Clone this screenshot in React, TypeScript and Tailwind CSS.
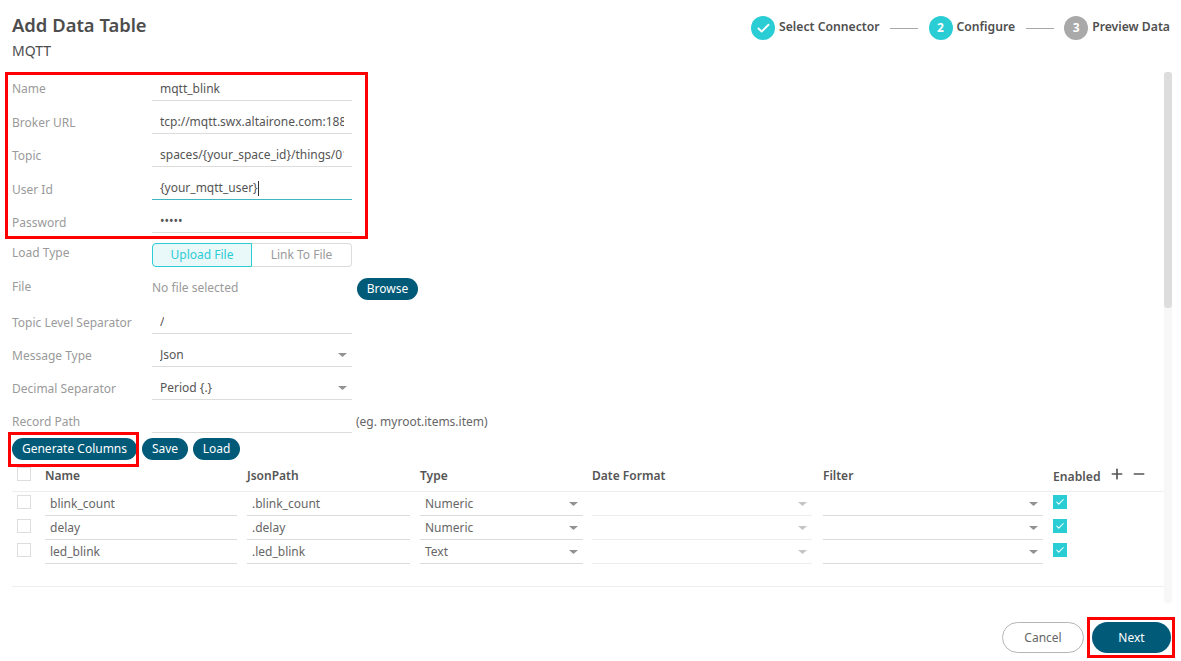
import React from "react";
import { Check, Plus, Minus } from "lucide-react";

const Caret = ({ light }: { light?: boolean }) => (
  <svg width="9" height="4" viewBox="0 0 9 4" className="shrink-0">
    <path d="M0 0h9L4.5 4z" fill={light ? "#c4c4c4" : "#929292"} />
  </svg>
);

const Row = ({ label, children, extra, h = "h-[33px]", lb = "pb-[3px]" }: { label: string; children: React.ReactNode; extra?: React.ReactNode; h?: string; lb?: string }) => (
  <div className={`flex ${h} items-end`}>
    <div className={`w-[140px] shrink-0 self-end text-[12px] leading-[16px] text-[#9a9a9a] ${lb}`}>{label}</div>
    <div className="w-[200px] shrink-0">{children}</div>
    {extra}
  </div>
);

const Field = ({ value, focus, caret, select }: { value: string; focus?: boolean; caret?: boolean; select?: boolean }) => (
  <div className={`flex h-[26px] items-center justify-between overflow-hidden border-b pl-[8px] pt-[3px] text-[12px] whitespace-nowrap text-[#555555] ${select ? "pr-[5px]" : "pr-[8px]"} ${focus ? "border-[#3fb5c0]" : "border-[#dcdcdc]"}`}>
    <span className="flex items-center overflow-hidden">
      {value}
      {caret && <span className="inline-block h-[15px] w-[1px] bg-[#333333]" />}
    </span>
    {select && <Caret />}
  </div>
);

const Pill = ({ children, cls = "" }: { children: React.ReactNode; cls?: string }) => (
  <button className={`h-[22px] rounded-full bg-[#015a78] text-[12px] text-white ${cls}`}>{children}</button>
);

const Box = () => <div className="h-[14px] w-[14px] border border-[#dedede] bg-white" />;

const TCell = ({ w, value, select, light, ml }: { w: string; value?: string; select?: boolean; light?: boolean; ml: string }) => (
  <div className={`${w} ${ml} flex h-[24px] shrink-0 items-center justify-between border-b pl-[5px] pr-[5px] text-[12px] text-[#666666] ${light ? "border-[#eeeeee]" : "border-[#dcdcdc]"}`}>
    <span>{value}</span>
    {select && <Caret light={light} />}
  </div>
);

const TRow = ({ name, path, type }: { name: string; path: string; type: string }) => (
  <div className="flex h-[24px] items-start">
    <div className="ml-[5px] mt-[3px] w-[14px] shrink-0"><Box /></div>
    <TCell ml="ml-[14px]" w="w-[192px]" value={name} />
    <TCell ml="ml-[10px]" w="w-[163px]" value={path} />
    <TCell ml="ml-[10px]" w="w-[163px]" value={type} select />
    <TCell ml="ml-[9px]" w="w-[220px]" select light />
    <TCell ml="ml-[11px]" w="w-[220px]" select />
    <div className="ml-[10px] mt-[3px] flex h-[14px] w-[14px] shrink-0 items-center justify-center bg-[#2bcdd5]">
      <Check size={10} color="#ffffff" strokeWidth={2.5} />
    </div>
  </div>
);

const Step = ({ n, label, color, done }: { n: string; label: string; color: string; done?: boolean }) => (
  <div className="flex items-center gap-[4px]">
    <div className={`flex h-[24px] w-[24px] items-center justify-center rounded-full text-[12px] font-bold text-white ${color}`}>
      {done ? <Check size={15} strokeWidth={3} color="#ffffff" /> : n}
    </div>
    <span className="pb-[2px] text-[12.2px] font-semibold text-[#4f4f4f]">{label}</span>
  </div>
);

const Line = () => <div className="mx-[10.5px] h-[1px] w-[28px] bg-[#a8a8a8]" />;

export default function App() {
  return (
    <div className="relative h-[661px] w-[1181px] overflow-hidden bg-white font-['Noto_Sans',sans-serif]">
      <div className="flex h-[72px] justify-between pl-[12px] pr-[11px]">
        <div>
          <div className="mt-[12px] text-[18.4px] leading-[25px] font-semibold text-[#4d4d4d]">Add Data Table</div>
          <div className="mt-[4px] text-[14px] leading-[20px] text-[#4d4d4d]">MQTT</div>
        </div>
        <div className="mt-[16px] flex h-[24px] items-center">
          <Step n="1" label="Select Connector" color="bg-[#2bcdd5]" done />
          <Line />
          <Step n="2" label="Configure" color="bg-[#2bcdd5]" />
          <Line />
          <Step n="3" label="Preview Data" color="bg-[#a9a9a9]" />
        </div>
      </div>

      <div className="flex h-[531px] pl-[12px]">
        <div className="w-[1152px] shrink-0">
          <div className="h-[171px]">
            <Row label="Name" h="h-[29px]" lb="pb-[4px]"><Field value="mqtt_blink" /></Row>
            <Row label="Broker URL"><Field value="tcp://mqtt.swx.altairone.com:1883" /></Row>
            <Row label="Topic"><Field value="spaces/{your_space_id}/things/01" /></Row>
            <Row label="User Id" lb="pb-[2px]"><Field value="{your_mqtt_user}" focus caret /></Row>
            <Row label="Password" lb="pb-[2px]"><Field value="•••••" /></Row>
          </div>

          <div className="flex h-[24px] items-start">
            <div className="w-[140px] pt-[1px] text-[12px] text-[#9a9a9a]">Load Type</div>
            <div className="flex h-[24px] w-[200px] text-[12px]">
              <div className="flex w-[100px] items-center justify-center rounded-l-[4px] border border-[#2bcdd5] bg-[#e9f8f9] text-[#2bcdd5]">Upload File</div>
              <div className="flex flex-1 items-center justify-center rounded-r-[4px] border border-l-0 border-[#dcdcdc] text-[#9a9a9a]">Link To File</div>
            </div>
          </div>

          <div className="mt-[11px] flex h-[23px] items-start">
            <div className="w-[140px] text-[12px] text-[#9a9a9a]">File</div>
            <div className="w-[205px] pt-[1px] text-[12px] text-[#9a9a9a]">No file selected</div>
            <Pill cls="w-[61px]">Browse</Pill>
          </div>

          <Row label="Topic Level Separator"><Field value="/" /></Row>
          <Row label="Message Type"><Field value="Json" select /></Row>
          <Row label="Decimal Separator"><Field value="Period {.}" select /></Row>
          <Row
            label="Record Path"
            extra={<span className="ml-[4px] self-end pb-[3px] text-[12px] leading-[16px] text-[#666666]">(eg. myroot.items.item)</span>}
          >
            <Field value="" />
          </Row>

          <div className="mt-[5px] flex h-[22px] gap-[5px]">
            <Pill cls="w-[125px]">Generate Columns</Pill>
            <Pill cls="w-[46px]">Save</Pill>
            <Pill cls="w-[47px]">Load</Pill>
          </div>

          <div className="mt-[7px] flex h-[25px] items-start border-b border-[#eeeeee] text-[12px] font-semibold text-[#555555]">
            <div className="ml-[5px] w-[14px] shrink-0"><Box /></div>
            <div className="ml-[14px] w-[192px] shrink-0">Name</div>
            <div className="ml-[10px] w-[163px] shrink-0">JsonPath</div>
            <div className="ml-[10px] w-[163px] shrink-0">Type</div>
            <div className="ml-[9px] w-[220px] shrink-0">Date Format</div>
            <div className="ml-[11px] w-[220px] shrink-0">Filter</div>
            <div className="ml-[10px] pt-[1px] text-[12.2px]">Enabled</div>
            <Plus size={16} strokeWidth={2.5} color="#555555" className="ml-[8px] -mt-[1px]" />
            <Minus size={16} strokeWidth={2.5} color="#555555" className="ml-[6px] -mt-[1px]" />
          </div>

          <TRow name="blink_count" path=".blink_count" type="Numeric" />
          <TRow name="delay" path=".delay" type="Numeric" />
          <TRow name="led_blink" path=".led_blink" type="Text" />
          <div className="mt-[22px] h-[1px] w-[1152px] bg-[#eeeeee]" />
        </div>
        <div className="w-[8px] shrink-0 rounded-[3px] bg-[#f7f7f7]">
          <div className="h-[236px] rounded-[3px] bg-[#dddddd]" />
        </div>
      </div>

      <div className="flex justify-end gap-[8px] pr-[10px] pt-[19px]">
        <button className="h-[31px] w-[82px] rounded-full border border-[#b5b5b5] bg-white text-[12px] text-[#666666]">Cancel</button>
        <button className="h-[31px] w-[79px] rounded-full bg-[#015a78] text-[12px] text-white">Next</button>
      </div>

      <div className="absolute left-[5px] top-[72px] h-[167px] w-[363px] border-[3px] border-[#ff0000]" />
      <div className="absolute left-[8px] top-[432px] h-[35px] w-[131px] border-[3px] border-[#ff0000]" />
      <div className="absolute left-[1087px] top-[617px] h-[41px] w-[88px] border-[3px] border-[#ff0000]" />
    </div>
  );
}
